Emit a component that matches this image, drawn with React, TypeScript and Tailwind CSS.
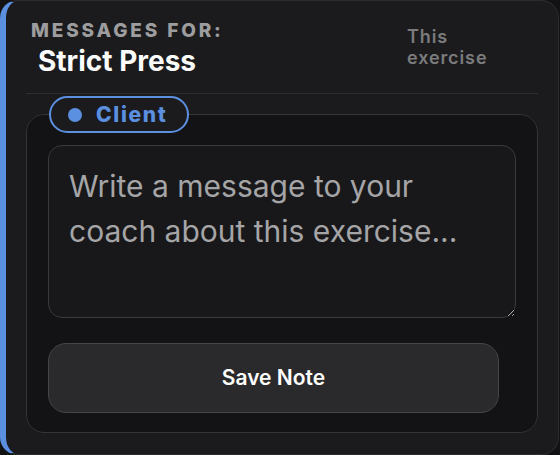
import React, { useState } from 'react';

const App: React.FC = () => {
  const [note, setNote] = useState<string>('');

  return (
    <div className="min-h-screen w-full bg-[#121214] font-['Inter','Noto_Sans',sans-serif]">
      <div className="w-[559px] rounded-[18px] border border-[#2c2c2e] border-l-[6px] border-l-[#5b8fe0] bg-[#1b1b1d] px-[20px] pt-[18px] pb-[21px]">
        {/* header */}
        <div className="flex items-start justify-between">
          <div>
            <div className="ml-[5px] text-[19px] leading-[23px] font-extrabold uppercase tracking-[0.15em] text-[#9d9d9f]">
              Messages for:
            </div>
            <div className="ml-[12px] mt-[3px] text-[28px] leading-[32px] font-bold text-white">
              Strict Press
            </div>
          </div>
          <div className="w-[131px] pt-[7px] text-[18px] leading-[21px] font-semibold tracking-[0.05em] text-[#7b7b7d]">
            This
            <br />
            exercise
          </div>
        </div>

        <div className="mt-[16px] h-px bg-[#2e2e30]" />

        {/* message box */}
        <fieldset className="mt-[2px] rounded-[18px] border border-[#353537] bg-[#131315] px-[21px] pb-[19px]">
          <legend className="ml-[1px] flex h-[37px] items-center gap-[14px] rounded-full border-2 border-[#5b8fe0] bg-[#1b1b1d] pl-[17px] pr-[19px]">
            <span className="h-[14px] w-[14px] rounded-full bg-[#5b8fe0]" />
            <span className="text-[21px] font-extrabold tracking-[0.08em] text-[#5b8fe0]">Client</span>
          </legend>

          <textarea
            value={note}
            onChange={(e) => setNote(e.target.value)}
            placeholder="Write a message to your coach about this exercise..."
            className="mt-[12px] block h-[173px] w-full rounded-[14px] border border-[#3a3a3c] bg-[#18181a] px-[20px] pt-[18px] text-[30px] leading-[45px] text-white outline-none placeholder:text-[#a5a5a7]"
          />

          <button className="mt-[25px] flex h-[70px] w-[451px] items-center justify-center rounded-[18px] border border-[#454547] bg-[#2a2a2d] text-[21px] font-semibold text-white">
            Save Note
          </button>
        </fieldset>
      </div>
    </div>
  );
};

export default App;
